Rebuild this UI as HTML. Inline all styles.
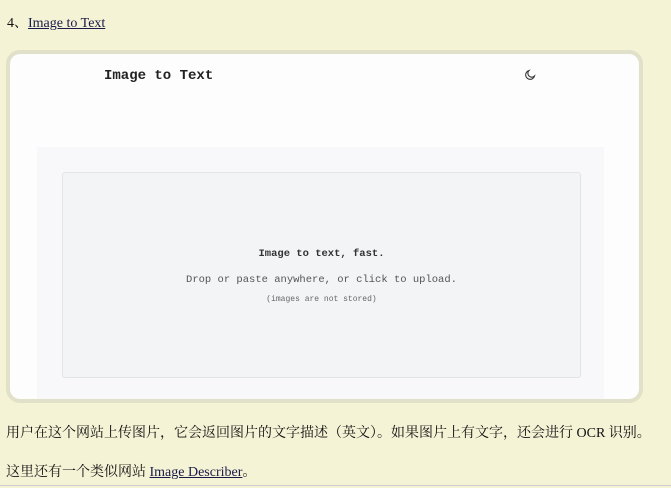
<!DOCTYPE html>
<html><head><meta charset="utf-8"><style>
body{margin:0;width:671px;height:488px;background:#f5f3d5;font-family:"Liberation Serif","Noto Serif CJK SC",serif;font-size:14px;color:#111;position:relative;overflow:hidden}
a{color:#1a1a4a;text-decoration:underline}
.t{position:absolute;white-space:nowrap}
.card{position:absolute;left:6px;top:50px;width:629px;height:345px;border:4px solid #e1e0c9;border-radius:14px;background:#fcfdfc;overflow:hidden}
.mono{font-family:"Liberation Mono","DejaVu Sans Mono",monospace}
.gray{position:absolute;left:27px;top:93px;width:567px;height:260px;background:#f8f8fa}
.drop{position:absolute;left:52px;top:118px;width:517px;height:204px;background:#f3f4f6;border:1px solid #e3e4e8;border-radius:3px}
</style></head><body>
<div class="t" style="left:7px;top:12px">4、<a>Image to Text</a></div>
<div class="card">
<div class="t mono" style="left:94px;top:14px;font-size:14px;font-weight:bold;color:#222">Image to Text</div>
<svg style="position:absolute;left:514px;top:15px" width="12" height="12" viewBox="0 0 12 12"><path d="M5 1.5A4.5 4.5 0 1 0 10.5 7 3.5 3.5 0 0 1 5 1.5Z" fill="none" stroke="#333" stroke-width="1.1"/></svg>
<div class="gray"></div>
<div class="drop">
<div class="t mono" style="left:0;width:517px;text-align:center;top:75px;font-size:10.5px;font-weight:bold;color:#333">Image to text, fast.</div>
<div class="t mono" style="left:0;width:517px;text-align:center;top:101px;font-size:10.5px;color:#555">Drop or paste anywhere, or click to upload.</div>
<div class="t mono" style="left:0;width:517px;text-align:center;top:122px;font-size:8px;color:#666">(images are not stored)</div>
</div>
</div>
<div class="t" style="left:6px;top:422px">用户在这个网站上传图片，它会返回图片的文字描述（英文）。如果图片上有文字，还会进行 OCR 识别。</div>
<div class="t" style="left:6px;top:461px">这里还有一个类似网站 <a>Image Describer</a>。</div>
<div style="position:absolute;left:0;top:485px;width:671px;height:1px;background:#ccc"></div>
</body></html>
